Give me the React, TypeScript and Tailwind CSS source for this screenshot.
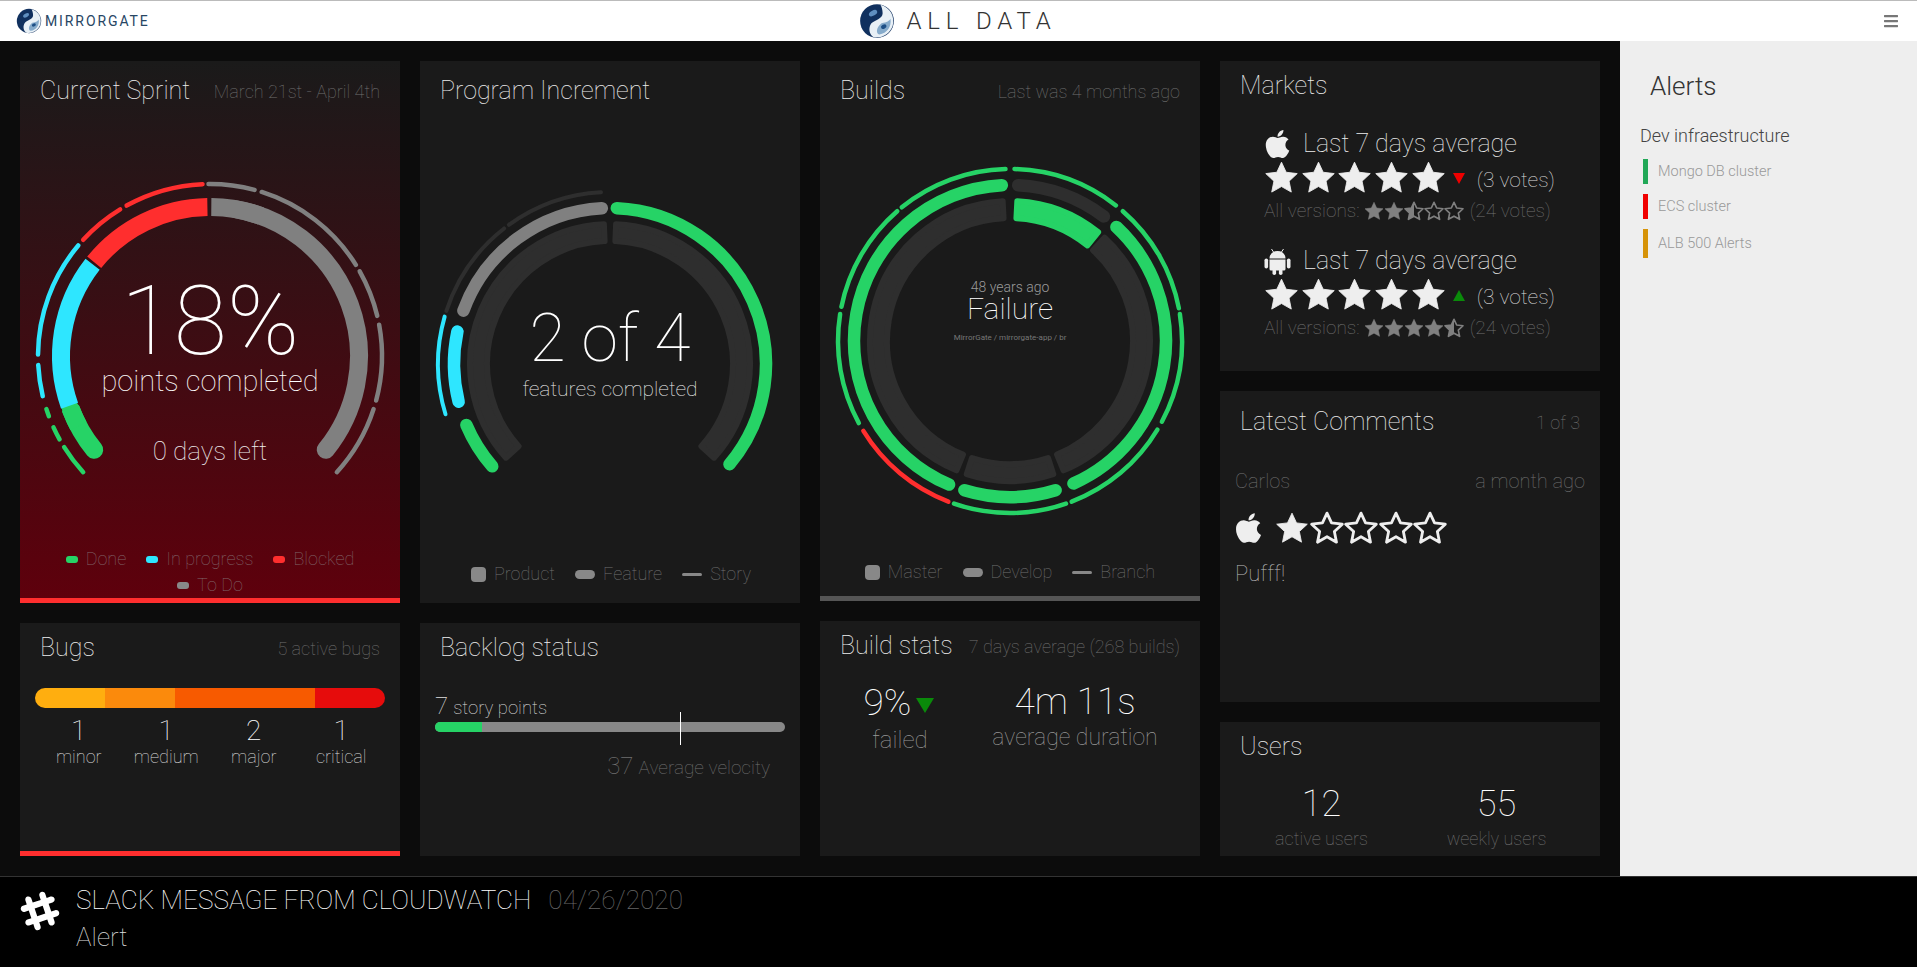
import { ReactNode } from "react";
import { FaApple, FaBars, FaSlackHash } from "react-icons/fa";

const GREEN = "#26d366";
const BLUE = "#2ee6ff";
const RED = "#ff2e2e";
const GRAY = "#808080";
const DARK = "#2e2e2e";

type Seg = [number, number, string];

const pt = (cx: number, cy: number, r: number, a: number) => {
  const t = (a * Math.PI) / 180;
  return `${(cx + r * Math.sin(t)).toFixed(2)} ${(cy - r * Math.cos(t)).toFixed(2)}`;
};

const arc = (cx: number, cy: number, r: number, a0: number, a1: number) =>
  `M${pt(cx, cy, r, a0)}A${r} ${r} 0 ${a1 - a0 > 180 ? 1 : 0} 1 ${pt(cx, cy, r, a1)}`;

// annular sector, used with a same colour stroke to get the soft corners
const sector = (cx: number, cy: number, r0: number, r1: number, a0: number, a1: number) =>
  `M${pt(cx, cy, r1, a0)}A${r1} ${r1} 0 ${a1 - a0 > 180 ? 1 : 0} 1 ${pt(cx, cy, r1, a1)}L${pt(cx, cy, r0, a1)}A${r0} ${r0} 0 ${a1 - a0 > 180 ? 1 : 0} 0 ${pt(cx, cy, r0, a0)}Z`;

const Arcs = ({ segs, r, w, cap = "round", cy }: { segs: Seg[]; r: number; w: number; cap?: "round" | "butt"; cy: number }) => (
  <>
    {segs.map(([a0, a1, c], i) => (
      <path key={i} d={arc(190, cy, r, a0, a1)} fill="none" stroke={c} strokeWidth={w} strokeLinecap={cap} />
    ))}
  </>
);

const Sectors = ({ segs, cy }: { segs: Seg[]; cy: number }) => (
  <>
    {segs.map(([a0, a1, c], i) => (
      <path key={i} d={sector(190, cy, 123, 140, a0, a1)} fill={c} stroke={c} strokeWidth={6} strokeLinejoin="round" />
    ))}
  </>
);

const Panel = ({
  title,
  sub,
  className = "",
  head = "pt-[10px]",
  children,
}: {
  title: string;
  sub?: string;
  className?: string;
  head?: string;
  children?: ReactNode;
}) => (
  <div className={`flex flex-col bg-[#1a1a1a] overflow-hidden ${className}`}>
    <div className={`flex items-center justify-between px-[20px] shrink-0 ${head}`}>
      <span className="text-[25px] leading-[30px] font-thin text-[#eee]">{title}</span>
      {sub && <span className="text-[18px] leading-[24px] mt-[1px] font-thin text-[#707070]">{sub}</span>}
    </div>
    {children}
  </div>
);

const Swatch = ({ className }: { className: string }) => <span className={`inline-block bg-[#888] ${className}`} />;

const Legend = ({ items, className = "" }: { items: [string, string][]; className?: string }) => (
  <div className={`flex justify-center gap-[20px] text-[18px] leading-[24px] font-thin ${className}`}>
    {items.map(([label, cls]) => (
      <span key={label} className="flex items-center gap-[8px]">
        <Swatch className={cls} />
        {label}
      </span>
    ))}
  </div>
);

const Star = ({ size, fill, color }: { size: number; fill: "full" | "half" | "none"; color: string }) => {
  const points = "12,1.5 15.2,8.4 22.8,9.3 17.2,14.5 18.7,22 12,18.2 5.3,22 6.8,14.5 1.2,9.3 8.8,8.4";
  return (
    <svg width={size} height={size} viewBox="0 0 24 24" className="shrink-0">
      {fill === "half" && <path d="M12 1.5V18.2L5.3 22 6.8 14.5 1.2 9.3 8.8 8.4Z" fill={color} />}
      <polygon
        points={points}
        fill={fill === "full" ? color : "none"}
        stroke={color}
        strokeWidth={fill === "full" ? 0.6 : 2}
        strokeLinejoin="round"
      />
    </svg>
  );
};

const Stars = ({ full, half = 0, size, color, gap }: { full: number; half?: number; size: number; color: string; gap: string }) => (
  <span className={`flex ${gap}`}>
    {[0, 1, 2, 3, 4].map((i) => (
      <Star key={i} size={size} color={color} fill={i < full ? "full" : i < full + half ? "half" : "none"} />
    ))}
  </span>
);

const Logo = ({ size }: { size: number }) => (
  <svg width={size} height={size} viewBox="0 0 32 32">
    <circle cx="16" cy="16" r="15" fill="#10305e" />
    <path d="M19 1.5C28 4 32 12 30 20 28 27 20 32 13 30.5 9 28 8 22 11 18 14 15 21 14 21 9 21 6 20 3 19 1.5Z" fill="#e8f0f6" />
    <path d="M20 18C25 17 27 16 28 14 29 21 25 27 18 28 15 27 15 22 20 18Z" fill="#86abcb" />
    <ellipse cx="22" cy="21" rx="2.6" ry="1.8" transform="rotate(-30 22 21)" fill="#1d4f86" />
    <ellipse cx="12.5" cy="9" rx="4" ry="2.3" transform="rotate(-30 12.5 9)" fill="#5f8fc0" />
  </svg>
);

const AndroidIcon = () => (
  <svg width={27} height={28} viewBox="0 0 27 28" className="shrink-0 fill-[#eeeeee]">
    <path d="M7.5 2l2 3M19.5 2l-2 3" stroke="#eeeeee" strokeWidth={1} />
    <path d="M5.5 11.5C5.5 7 9 4 13.5 4S21.5 7 21.5 11.5Z" />
    <path d="M5.5 12.5h16v9.5a1.500 1.500 0 0 1-1.500 1.500h-13a1.500 1.500 0 0 1-1.500-1.500Z" />
    <rect x="0.500" y="11.500" width="3.600" height="10" rx="1.800" />
    <rect x="22.900" y="11.500" width="3.600" height="10" rx="1.800" />
    <rect x="8.500" y="22" width="3.600" height="6" rx="1.800" />
    <rect x="14.900" y="22" width="3.600" height="6" rx="1.800" />
  </svg>
);

const Market = ({
  icon,
  trend,
  full,
  half,
  className = "",
}: {
  icon: ReactNode;
  trend: ReactNode;
  full: number;
  half: number;
  className?: string;
}) => (
  <div className={`flex flex-col pl-[44px] ${className}`}>
    <div className="flex items-center gap-[12px] h-[32px] text-[25px] font-thin text-[#eee]">
      {icon}
      <span>Last 7 days average</span>
    </div>
    <div className="flex items-center h-[32px] mt-[1px]">
      <Stars full={5} size={35} color="#eeeeee" gap="gap-[1.700px]" />
      {trend}
      <span className="ml-[12px] mt-[8px] text-[21px] font-thin text-[#ddd]">(3 votes)</span>
    </div>
    <div className="flex items-center h-[28px] mt-[4px] text-[19px] font-thin text-[#707070]">
      <span className="mr-[4px]">All versions:</span>
      <Stars full={full} half={half} size={20} color={GRAY} gap="gap-0" />
      <span className="ml-[6px]">(24 votes)</span>
    </div>
  </div>
);

const SprintPanel = () => {
  const cy = 241;
  return (
    <Panel
      title="Current Sprint"
      sub="March 21st - April 4th"
      head="pt-[15px]"
      className="h-[542px] bg-linear-to-b/srgb from-[#1a1a1a] to-[#5e000c] border-b-[5px] border-[#ff2e2e]"
    >
      <div className="relative h-[432px] mt-[9px] shrink-0">
        <svg width={380} height={432} className="block">
          <Arcs
            cy={cy}
            r={172}
            w={4.5}
            segs={[
              [-132.5, -122, GREEN],
              [-119, -114.5, GREEN],
              [-110.5, -108, GREEN],
              [-103.5, -93, BLUE],
              [-89.5, -50, BLUE],
              [-47.5, -31.5, RED],
              [-29, -2.5, RED],
              [-0.5, 15, GRAY],
              [17.5, 58, GRAY],
              [60.5, 76.5, GRAY],
              [79.5, 105, GRAY],
              [108, 132.5, GRAY],
            ]}
          />
          <path d={arc(190, cy, 149, -129, -111)} fill="none" stroke={GREEN} strokeWidth={18} strokeLinecap="round" />
          <path d={arc(190, cy, 149, -118, -110.5)} fill="none" stroke={GREEN} strokeWidth={18} />
          <Arcs
            cy={cy}
            r={149}
            w={18}
            cap="butt"
            segs={[
              [-109.5, -52, BLUE],
              [-51, -1, RED],
            ]}
          />
          <path d={arc(190, cy, 149, 10, 129)} fill="none" stroke={GRAY} strokeWidth={18} strokeLinecap="round" />
          <path d={arc(190, cy, 149, 0.5, 20)} fill="none" stroke={GRAY} strokeWidth={18} />
        </svg>
        <div className="absolute inset-x-0 top-[161px] flex flex-col items-center text-white">
          <span className="text-[97px] leading-[90px] font-thin">18%</span>
          <span className="text-[29px] leading-[30px] font-thin text-white">points completed</span>
          <span className="text-[26px] leading-[32px] font-thin text-[#eee] mt-[39px]">0 days left</span>
        </div>
      </div>
      <Legend
        className="flex-wrap px-[30px] gap-y-[2px] text-[#80656a]"
        items={[
          ["Done", "w-[12px] h-[7px] rounded-[3px] !bg-[#26d366]"],
          ["In progress", "w-[12px] h-[7px] rounded-[3px] !bg-[#2ee6ff]"],
          ["Blocked", "w-[12px] h-[7px] rounded-[3px] !bg-[#ff2e2e]"],
          ["To Do", "w-[12px] h-[7px] rounded-[3px]"],
        ]}
      />
    </Panel>
  );
};

const IncrementPanel = () => {
  const cy = 249;
  return (
    <Panel title="Program Increment" head="pt-[15px]" className="h-[542px]">
      <div className="relative h-[440px] mt-[9px] shrink-0">
        <svg width={380} height={440} className="block">
          <Sectors
            cy={cy}
            segs={[
              [-132, -2.5, DARK],
              [2.5, 132, DARK],
            ]}
          />
          <Arcs
            cy={cy}
            r={156}
            w={12.5}
            segs={[
              [2.5, 130, GREEN],
              [-70, -3, GRAY],
              [-104, -78, BLUE],
              [-131, -113, GREEN],
            ]}
          />
          <Arcs
            cy={cy}
            r={172}
            w={4}
            segs={[
              [-36, -3, DARK],
              [-72, -38, DARK],
              [-107, -74, BLUE],
            ]}
          />
        </svg>
        <div className="absolute inset-x-0 top-[194px] flex flex-col items-center">
          <span className="text-[66px] leading-[60px] font-thin text-white">2 of 4</span>
          <span className="text-[21px] leading-[28px] font-thin text-[#eee] mt-[6px]">features completed</span>
        </div>
      </div>
      <Legend
        className="mt-[7px] pl-[2px] text-[#707070]"
        items={[
          ["Product", "w-[15px] h-[15px] rounded-[4px]"],
          ["Feature", "w-[20px] h-[9px] rounded-full"],
          ["Story", "w-[20px] h-[3px] rounded-full"],
        ]}
      />
    </Panel>
  );
};

const BuildsPanel = () => {
  const cy = 226;
  return (
    <Panel title="Builds" sub="Last was 4 months ago" head="pt-[15px]" className="h-[540px] border-b-[5px] border-[#555]">
      <div className="relative h-[440px] mt-[9px] shrink-0">
        <svg width={380} height={440} className="block">
          <Sectors
            cy={cy}
            segs={[
              [3, 39, GREEN],
              [42.5, 157.5, DARK],
              [162, 198, DARK],
              [202.5, 357, DARK],
            ]}
          />
          <Arcs
            cy={cy}
            r={156}
            w={12.5}
            segs={[
              [3, 37, DARK],
              [43, 156, GREEN],
              [163, 197, GREEN],
              [203, 357, GREEN],
            ]}
          />
          <Arcs
            cy={cy}
            r={172}
            w={4.5}
            segs={[
              [1.5, 38, GREEN],
              [41, 79, GREEN],
              [81, 118, GREEN],
              [121, 159, GREEN],
              [161, 199, GREEN],
              [201, 238.5, RED],
              [241.5, 279, GREEN],
              [281.5, 319, GREEN],
              [321, 358.5, GREEN],
            ]}
          />
        </svg>
        <div className="absolute inset-x-0 top-[164px] flex flex-col items-center">
          <span className="text-[14px] leading-[16px] font-light text-[#999]">48 years ago</span>
          <span className="text-[30px] leading-[28px] font-thin text-white">Failure</span>
          <span className="text-[8px] leading-[10px] font-normal text-[#777] mt-[10px]">MirrorGate / mirrorgate-app / br</span>
        </div>
      </div>
      <Legend
        className="mt-[5px] text-[#707070]"
        items={[
          ["Master", "w-[15px] h-[15px] rounded-[4px]"],
          ["Develop", "w-[20px] h-[9px] rounded-full"],
          ["Branch", "w-[20px] h-[3px] rounded-full"],
        ]}
      />
    </Panel>
  );
};

const bugs: [string, string][] = [
  ["1", "minor"],
  ["1", "medium"],
  ["2", "major"],
  ["1", "critical"],
];

const BugsPanel = () => (
  <Panel title="Bugs" sub="5 active bugs" className="flex-1 border-b-[5px] border-[#ff2e2e]">
    <div className="mx-[15px] mt-[25px] flex h-[20px] rounded-full overflow-hidden">
      <div className="flex-1 bg-[#ffae0f]" />
      <div className="flex-1 bg-[#fb8a0c]" />
      <div className="flex-[2] bg-[#f75a00]" />
      <div className="flex-1 bg-[#e60c0c]" />
    </div>
    <div className="mx-[15px] mt-[8px] grid grid-cols-4 text-center">
      {bugs.map(([n, label]) => (
        <div key={label} className="flex flex-col items-center">
          <span className="text-[28px] leading-[30px] font-thin text-white">{n}</span>
          <span className="text-[18px] leading-[22px] font-thin text-[#ddd]">{label}</span>
        </div>
      ))}
    </div>
  </Panel>
);

const BacklogPanel = () => (
  <Panel title="Backlog status" className="flex-1">
    <div className="mx-[15px] mt-[25px] h-[30px] flex items-baseline gap-[5px] font-thin text-[#ddd]">
      <span className="text-[24px]">7</span>
      <span className="text-[18.500px]">story points</span>
    </div>
    <div className="relative mx-[15px] mt-[4px] h-[10px] rounded-full bg-[#888]">
      <div className="h-full w-[47px] rounded-l-full bg-[#26d366]" />
      <div className="absolute left-[245px] -top-[10px] h-[33px] w-px bg-white" />
    </div>
    <div className="mt-[20px] pr-[30px] flex items-baseline justify-end gap-[5px] font-thin text-[#707070]">
      <span className="text-[24px] leading-[28px]">37</span>
      <span className="text-[19px]">Average velocity</span>
    </div>
  </Panel>
);

const StatsPanel = () => (
  <Panel title="Build stats" sub="7 days average (268 builds)" className="flex-1">
    <div className="flex mt-[19px]">
      <div className="w-[132px] ml-[14px] flex flex-col items-center">
        <div className="flex items-center gap-[5px] h-[46px] pr-[2px]">
          <span className="text-[37px] leading-[44px] font-thin text-white">9%</span>
          <span className="w-0 h-0 mt-[4px] border-x-[9px] border-x-transparent border-t-[15px] border-t-[#0a8a0a]" />
        </div>
        <span className="text-[24px] leading-[30px] font-thin text-[#999] -mt-[1px]">failed</span>
      </div>
      <div className="flex-1 flex flex-col items-center pr-[16px]">
        <span className="text-[37px] leading-[44px] font-thin text-white">4m 11s</span>
        <span className="text-[23px] leading-[28px] font-thin text-[#999]">average duration</span>
      </div>
    </div>
  </Panel>
);

const MarketsPanel = () => (
  <Panel title="Markets" className="h-[310px]">
    <Market
      className="mt-[27px]"
      icon={<FaApple className="text-[32px] text-[#eee] w-[27px]" />}
      full={2}
      half={1}
      trend={<span className="ml-[7px] mt-[3px] w-0 h-0 border-x-[6px] border-x-transparent border-t-[11px] border-t-[#ee0000]" />}
    />
    <Market
      className="mt-[20px]"
      icon={<AndroidIcon />}
      full={4}
      half={1}
      trend={<span className="ml-[7px] mt-[3px] w-0 h-0 border-x-[6px] border-x-transparent border-b-[11px] border-b-[#0a8a0a]" />}
    />
  </Panel>
);

const CommentsPanel = () => (
  <Panel title="Latest Comments" sub="1 of 3" head="pt-[16px]" className="h-[311px]">
    <div className="flex justify-between px-[15px] mt-[30px] text-[20px] leading-[28px] font-thin text-[#707070]">
      <span>Carlos</span>
      <span>a month ago</span>
    </div>
    <div className="flex items-center px-[15px] mt-[16px] h-[34px]">
      <FaApple className="text-[34px] text-[#eee] w-[27px] mr-[13px]" />
      <Stars full={1} size={34} color="#eeeeee" gap="gap-[0.500px]" />
    </div>
    <div className="px-[15px] mt-[15px] text-[22px] leading-[28px] font-thin text-[#bbb]">Pufff!</div>
  </Panel>
);

const UsersPanel = () => (
  <Panel title="Users" className="flex-1">
    <div className="grid grid-cols-2 mt-[20px] pl-[14px] pr-[16px]">
      {[
        ["12", "active users"],
        ["55", "weekly users"],
      ].map(([n, label]) => (
        <div key={label} className="flex flex-col items-center">
          <span className="text-[36px] leading-[44px] font-thin text-white">{n}</span>
          <span className="text-[18px] leading-[24px] font-thin text-[#707070] mt-[1px]">{label}</span>
        </div>
      ))}
    </div>
  </Panel>
);

const alerts: [string, string, string][] = [
  ["Mongo DB cluster", "bg-[#21a857]", "h-[25px]"],
  ["ECS cluster", "bg-[#f00000]", "h-[25px]"],
  ["ALB 500 Alerts", "bg-[#d69308]", "h-[29px]"],
];

const AlertsSidebar = () => (
  <aside className="w-[297px] shrink-0 bg-[#eeeeee] pt-[29px] pl-[20px]">
    <h2 className="pl-[10px] text-[26px] leading-[32px] font-light text-[#333]">Alerts</h2>
    <div className="mt-[23px] text-[18px] leading-[22px] font-light text-[#444]">Dev infraestructure</div>
    <div className="mt-[12px] flex flex-col gap-[10px]">
      {alerts.map(([label, bar, h]) => (
        <div key={label} className={`flex items-center pl-[3px] gap-[10px] ${h}`}>
          <span className={`w-[5px] h-full ${bar}`} />
          <span className="text-[14.500px] font-light text-[#999]">{label}</span>
        </div>
      ))}
    </div>
  </aside>
);

const App = () => (
  <div className="w-[1917px] h-[967px] flex flex-col overflow-hidden font-[family-name:Roboto,sans-serif]">
    <header className="h-[41px] shrink-0 border-t border-[#bbb] bg-white grid grid-cols-3 items-center">
      <div className="flex items-center gap-[3px] pl-[16px]">
        <Logo size={26} />
        <span className="text-[14px] font-normal tracking-[1.900px] text-[#274664]">MIRRORGATE</span>
      </div>
      <div className="flex items-center justify-center gap-[12px] pr-[2px]">
        <Logo size={36} />
        <span className="text-[24px] font-light tracking-[5.800px] text-[#333]">ALL DATA</span>
      </div>
      <div className="flex justify-end pr-[18px]">
        <FaBars className="text-[16px] text-[#777]" />
      </div>
    </header>
    <main className="h-[835px] shrink-0 flex">
      <div className="flex-1 bg-[#0c0c0c] grid grid-cols-4 gap-x-[20px] px-[20px] pt-[20px] pb-[20px]">
        <div className="flex flex-col gap-[20px]">
          <SprintPanel />
          <BugsPanel />
        </div>
        <div className="flex flex-col gap-[20px]">
          <IncrementPanel />
          <BacklogPanel />
        </div>
        <div className="flex flex-col gap-[20px]">
          <BuildsPanel />
          <StatsPanel />
        </div>
        <div className="flex flex-col gap-[20px]">
          <MarketsPanel />
          <CommentsPanel />
          <UsersPanel />
        </div>
      </div>
      <AlertsSidebar />
    </main>
    <footer className="flex-1 bg-black border-t border-[#333] flex pl-[18px] pt-[12px]">
      <FaSlackHash className="text-[44px] text-white" />
      <div className="ml-[14px] flex flex-col -mt-[5px]">
        <div className="flex items-baseline gap-[17px] font-thin text-[26.200px] leading-[32px]">
          <span className="text-white">SLACK MESSAGE FROM CLOUDWATCH</span>
          <span className="text-[#666]">04/26/2020</span>
        </div>
        <span className="mt-[5px] text-[26px] leading-[32px] font-thin text-[#ddd]">Alert</span>
      </div>
    </footer>
  </div>
);

export default App;
